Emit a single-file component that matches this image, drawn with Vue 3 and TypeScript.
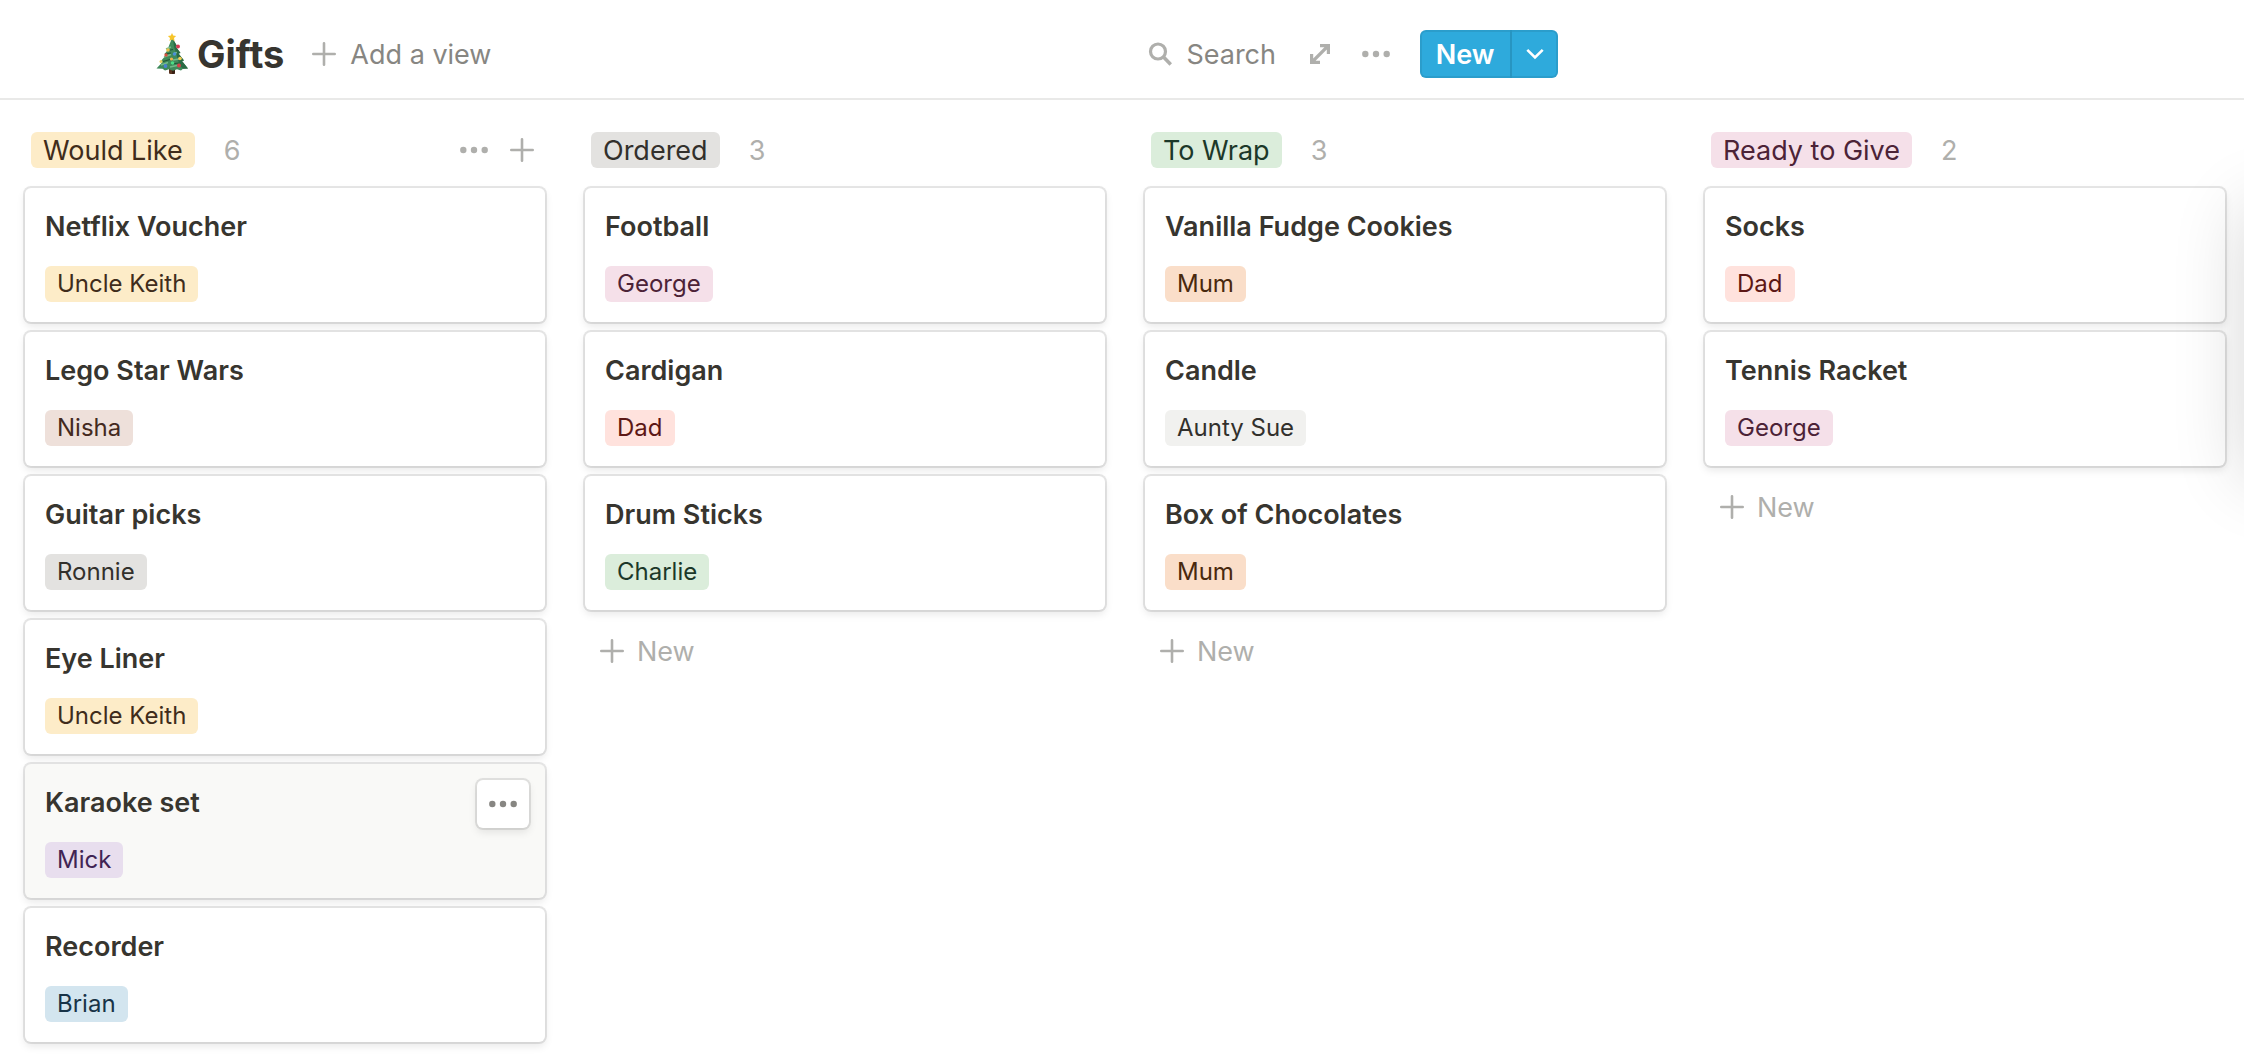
<script setup lang="ts">
interface Card {
  title: string
  tag: string
  color: string
  active?: boolean
}

interface Column {
  name: string
  color: string
  hovered?: boolean
  cards: Card[]
}

const columns: Column[] = [
  {
    name: 'Would Like',
    color: 'yellow',
    hovered: true,
    cards: [
      { title: 'Netflix Voucher', tag: 'Uncle Keith', color: 'yellow' },
      { title: 'Lego Star Wars', tag: 'Nisha', color: 'brown' },
      { title: 'Guitar picks', tag: 'Ronnie', color: 'gray' },
      { title: 'Eye Liner', tag: 'Uncle Keith', color: 'yellow' },
      { title: 'Karaoke set', tag: 'Mick', color: 'purple', active: true },
      { title: 'Recorder', tag: 'Brian', color: 'blue' },
    ],
  },
  {
    name: 'Ordered',
    color: 'gray',
    cards: [
      { title: 'Football', tag: 'George', color: 'pink' },
      { title: 'Cardigan', tag: 'Dad', color: 'red' },
      { title: 'Drum Sticks', tag: 'Charlie', color: 'green' },
    ],
  },
  {
    name: 'To Wrap',
    color: 'green',
    cards: [
      { title: 'Vanilla Fudge Cookies', tag: 'Mum', color: 'orange' },
      { title: 'Candle', tag: 'Aunty Sue', color: 'light' },
      { title: 'Box of Chocolates', tag: 'Mum', color: 'orange' },
    ],
  },
  {
    name: 'Ready to Give',
    color: 'pink',
    cards: [
      { title: 'Socks', tag: 'Dad', color: 'red' },
      { title: 'Tennis Racket', tag: 'George', color: 'pink' },
    ],
  },
]
</script>

<template>
  <div class="page">
    <header class="topbar">
      <div class="topbar-inner">
        <svg class="tree" viewBox="0 0 32 42" aria-hidden="true">
          <path d="M13 34h6v6.500q-3 1-6 0z" fill="#5a3420" />
          <path d="M16 34h3v6.500q-1.500.5-3 .5z" fill="#3b2014" />
          <path d="M16 5l5 8-1.500.3 5 6.700-2 .4 5.500 7-2 .6 6 7.500-5 .3-2 1.700-4-1.200-4 1.400-4-1.400-4 1.200-2.500-1.700-6-.3 6-6.500-2-.5 6-7-2-.5 5.500-6.700-1.500-.3z" fill="#3f8a5b" />
          <path d="M17 6l4 7-1.500.3 5 6.700-2 .4 5.500 7-2 .6 6 7.500-5 .3-3-3-2-6-2-7-2-6z" fill="#2b6b45" />
          <path d="M10 16l5-2M8 24l7-2.500M17 27l6-1M5 32l7-2.500M14 34l7-1.500M18 20l3-.5" stroke="#74b98a" stroke-width="1.500" fill="none" />
          <path d="M9 21l6-1M7 28.500l7-2M15 31l8-1M12 17.500l5-1" stroke="#1f5636" stroke-width="1.200" fill="none" />
          <path d="M16 0l1.200 2.600 2.900.3-2.100 2 .6 3L16 6.400 13.400 7.900l.6-3-2.100-2 2.900-.3z" fill="#f7c52b" />
          <circle cx="22" cy="13.500" r="2" fill="#d43a52" />
          <circle cx="12" cy="17" r="1.800" fill="#e8c14a" />
          <circle cx="18.500" cy="21" r="1.800" fill="#4a8fd8" />
          <circle cx="10" cy="22" r="1.700" fill="#d5503f" />
          <circle cx="24" cy="25.500" r="1.800" fill="#f0cd55" />
          <circle cx="15.500" cy="26" r="1.600" fill="#f0b24a" />
          <circle cx="5" cy="28.500" r="1.500" fill="#e9cf63" />
          <circle cx="16.500" cy="30" r="1.800" fill="#4ddc86" />
          <circle cx="9.500" cy="33" r="1.900" fill="#4a80cf" />
          <circle cx="23" cy="32.500" r="2" fill="#d8404a" />
        </svg>
        <h1 class="title">Gifts</h1>
        <button class="ghost add-view" type="button">
          <svg class="plus" viewBox="0 0 24 24" aria-hidden="true"><path d="M12 1.300v21.400M1.300 12h21.400" /></svg>
          <span>Add a view</span>
        </button>
        <div class="actions">
          <button class="ghost search" type="button">
            <svg class="glyph" viewBox="0 0 24 24" aria-hidden="true">
              <circle cx="10" cy="9.500" r="7.500" fill="none" stroke="currentColor" stroke-width="3.200" />
              <path d="M15.500 15l7.300 7.500" fill="none" stroke="currentColor" stroke-width="3.600" />
            </svg>
            <span>Search</span>
          </button>
          <button class="ghost expand" type="button" aria-label="Open as full page">
            <svg viewBox="0 0 20 20" aria-hidden="true">
              <path d="M10 0H20v10h-3.200V5.600L5.600 16.800H10V20H0V10h3.200v4.400L14.400 3.200H10z" fill="currentColor" />
            </svg>
          </button>
          <button class="ghost more" type="button" aria-label="More options">
            <svg class="dots" viewBox="0 0 28 8" aria-hidden="true"><circle cx="3.300" cy="4" r="3.200" /><circle cx="14" cy="4" r="3.200" /><circle cx="24.700" cy="4" r="3.200" /></svg>
          </button>
          <div class="split">
            <button class="split-main" type="button">New</button>
            <button class="split-arrow" type="button" aria-label="New from template">
              <svg viewBox="0 0 18 12" aria-hidden="true"><path d="M1.300 1.800L9 9.500l7.700-7.700" /></svg>
            </button>
          </div>
        </div>
      </div>
    </header>

    <main class="board">
      <section v-for="column in columns" :key="column.name" class="column">
        <div class="column-head">
          <h2 class="pill heading" :class="column.color">{{ column.name }}</h2>
          <span class="count">{{ column.cards.length }}</span>
          <div v-if="column.hovered" class="tools">
            <button class="ghost" type="button" aria-label="Column options">
              <svg class="dots" viewBox="0 0 28 8" aria-hidden="true"><circle cx="3.300" cy="4" r="3.200" /><circle cx="14" cy="4" r="3.200" /><circle cx="24.700" cy="4" r="3.200" /></svg>
            </button>
            <button class="ghost" type="button" aria-label="Add card">
              <svg class="plus" viewBox="0 0 24 24" aria-hidden="true"><path d="M12 1.300v21.400M1.300 12h21.400" /></svg>
            </button>
          </div>
        </div>

        <article
          v-for="card in column.cards"
          :key="card.title"
          class="card"
          :class="{ active: card.active }"
        >
          <h3 class="card-title">{{ card.title }}</h3>
          <span class="pill tag" :class="card.color">{{ card.tag }}</span>
          <button v-if="card.active" class="card-menu" type="button" aria-label="Card options">
            <svg class="dots" viewBox="0 0 28 8" aria-hidden="true"><circle cx="3.300" cy="4" r="3.200" /><circle cx="14" cy="4" r="3.200" /><circle cx="24.700" cy="4" r="3.200" /></svg>
          </button>
        </article>

        <!-- A hovered column offers its add button in the heading instead. -->
        <button v-if="!column.hovered" class="ghost new-card" type="button">
          <svg class="plus" viewBox="0 0 24 24" aria-hidden="true"><path d="M12 1.300v21.400M1.300 12h21.400" /></svg>
          <span>New</span>
        </button>
      </section>
      <div class="edge-shadow" aria-hidden="true"></div>
    </main>
  </div>
</template>

<style>
body {
  margin: 0;
  background: #fff;
}
</style>

<style scoped>
.page {
  min-height: 100vh;
  display: flex;
  flex-direction: column;
  color: #37352f;
  font-family: Inter, "Liberation Sans", sans-serif;
  font-size: 27px;
  line-height: 36px;
}

h1,
h2,
h3 {
  margin: 0;
}

button {
  padding: 0;
  border: 0;
  background: none;
  font: inherit;
  cursor: pointer;
}

svg {
  display: block;
  flex: none;
}

.ghost {
  display: flex;
  align-items: center;
  color: #afafac;
}

.ghost span,
.count,
.split-main {
  padding-top: 2px;
}

.plus {
  width: 24px;
  height: 24px;
  fill: none;
  stroke: currentColor;
  stroke-width: 2.6;
  stroke-linecap: round;
}

.dots {
  width: 28px;
  height: 8px;
  fill: currentColor;
}

.topbar {
  flex: none;
  padding: 10px 24px 0 156px;
  border-bottom: 2px solid #e9e9e8;
}

.topbar-inner {
  display: flex;
  align-items: center;
  height: 88px;
  max-width: 1402px;
}

.tree {
  width: 32px;
  height: 42px;
}

.title {
  margin-left: 9px;
  font-size: 38px;
  line-height: 48px;
  font-weight: 700;
}

.add-view {
  margin-left: 28px;
  gap: 14px;
}

.add-view span,
.search span {
  color: #878682;
}

.actions {
  display: flex;
  align-items: center;
  margin-left: auto;
}

.search {
  gap: 14px;
}

.glyph {
  width: 24px;
  height: 24px;
}

.expand {
  margin-left: 34px;
}

.expand svg {
  width: 20px;
  height: 20px;
}

.more {
  margin-left: 32px;
}

.split {
  display: flex;
  height: 48px;
  margin-left: 30px;
  border-radius: 6px;
  background: #2eaadc;
  box-shadow: inset 0 0 0 2px rgba(15, 15, 15, 0.08);
  color: #fff;
}

.split-main {
  width: 90px;
  color: #fff;
  font-weight: 600;
}

.split-arrow {
  display: flex;
  align-items: center;
  justify-content: center;
  width: 48px;
  border-left: 2px solid #2795c1;
}

.split-arrow svg {
  width: 18px;
  height: 12px;
  fill: none;
  stroke: #fff;
  stroke-width: 2.6;
}

.board {
  position: relative;
  flex: 1;
  display: flex;
  align-items: flex-start;
  gap: 40px;
  padding: 20px 25px 0;
  overflow: hidden;
}

.column {
  flex: none;
  width: 520px;
}

.column-head {
  display: flex;
  align-items: center;
  height: 60px;
  margin-bottom: 8px;
  padding: 0 11px 0 6px;
}

.pill {
  display: inline-block;
  height: 36px;
  padding: 0 12px;
  border-radius: 6px;
  line-height: 36px;
  white-space: nowrap;
}

.heading {
  font-size: 27px;
  line-height: 38px;
  font-weight: 400;
}

.count {
  margin-left: 29px;
  color: #afafac;
}

.tools {
  display: flex;
  align-items: center;
  gap: 22px;
  margin-left: auto;
}

.card {
  position: relative;
  box-sizing: border-box;
  min-height: 134px;
  margin-bottom: 10px;
  padding: 20px;
  border-radius: 6px;
  background: #fff;
  box-shadow: 0 0 0 2px rgba(15, 15, 15, 0.1), 0 4px 8px rgba(15, 15, 15, 0.1);
}

.card.active {
  background: #f9f9f7;
}

.card-title {
  margin-bottom: 20px;
  font-size: 27px;
  line-height: 38px;
  font-weight: 600;
}

.tag {
  display: block;
  width: max-content;
  font-size: 24px;
}

.card-menu {
  position: absolute;
  top: 16px;
  right: 16px;
  display: flex;
  align-items: center;
  justify-content: center;
  width: 52px;
  height: 48px;
  border-radius: 6px;
  background: #fff;
  box-shadow: 0 0 0 2px rgba(15, 15, 15, 0.1), 0 4px 8px rgba(15, 15, 15, 0.1);
  color: #878682;
}

.new-card {
  margin-top: 22px;
  padding-left: 15px;
  gap: 13px;
}

.yellow { background: #fdecc8; color: #402c1b; }
.brown { background: #eee0da; color: #442a1e; }
.gray { background: #e3e2e0; color: #32302c; }
.light { background: #f1f1ef; color: #32302c; }
.orange { background: #fadec9; color: #49290e; }
.green { background: #dbeddb; color: #1c3829; }
.blue { background: #d3e5ef; color: #183347; }
.purple { background: #e8deee; color: #412454; }
.pink { background: #f5e0e9; color: #4c2337; }
.red { background: #ffe2dd; color: #5d1715; }

/* Soft shadow cast by the panel that sits past the right edge. */
.edge-shadow {
  position: absolute;
  top: 90px;
  left: 100%;
  width: 100px;
  height: 270px;
  box-shadow: 0 18px 72px rgba(15, 15, 15, 0.16);
  pointer-events: none;
}
</style>
